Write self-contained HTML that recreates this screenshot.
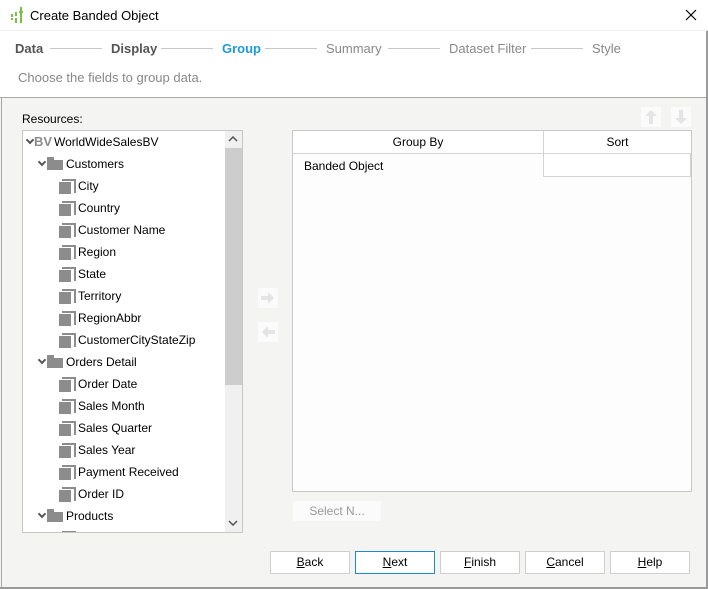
<!DOCTYPE html>
<html><head><style>
*{margin:0;padding:0;box-sizing:border-box}
body{width:708px;height:589px;overflow:hidden;background:#f4f4f3;font-family:"Liberation Sans",sans-serif;font-size:12px;color:#000;position:relative}
.a{position:absolute}
.top{left:0;top:0;width:708px;height:98px;background:#fff;border-bottom:1px solid #a8a8a8}
.step{top:41px;font-size:13px;font-weight:bold;color:#555}
.ln{top:48px;height:1px;background:#c8c8c8}
.dis{color:#888;font-weight:normal}
.tree{left:22px;top:130px;width:221px;height:403px;background:#fff;border:1px solid #c8c8c8;overflow:hidden}
.r{position:absolute;white-space:nowrap;height:22px;line-height:22px}
.fi{position:absolute;width:15px;height:15px}
.fi:before{content:"";position:absolute;left:3px;top:0;width:12px;height:12px;background:#fff;border:2px solid #8c8c8c;border-left:none;border-bottom:none}
.fi:after{content:"";position:absolute;left:0;top:3px;width:12px;height:12px;background:#8c8c8c}
.fo{position:absolute;width:16px;height:13px}
.fo:before{content:"";position:absolute;left:0;top:0;width:7px;height:3px;background:#8c8c8c}
.fo:after{content:"";position:absolute;left:0;top:3px;width:16px;height:10px;background:#8c8c8c}
.chev{position:absolute;width:6px;height:6px;border-right:2px solid #555;border-bottom:2px solid #555;transform:rotate(45deg)}
.btn{top:551px;width:80px;height:23px;background:#fff;border:1px solid #cfcfcf;text-align:center;line-height:21px;font-size:12px}
</style></head><body>
<div class="a top"></div>
<div class="a" style="left:0;top:30px;width:708px;height:1px;background:#f0f0f0"></div>
<svg class="a" style="left:10px;top:6px" width="14" height="18"><g fill="#7bc043"><rect x="1" y="8" width="2" height="3"/><rect x="1" y="12" width="2" height="2"/><rect x="5" y="6" width="2" height="11"/><rect x="5" y="10" width="2" height="2" fill="#fff"/><rect x="10" y="1" width="2" height="16"/><rect x="9" y="5" width="4" height="2"/></g></svg>
<div class="a" style="left:30px;top:8px;font-size:13px">Create Banded Object</div>
<svg class="a" style="left:685px;top:9px" width="12" height="12"><path d="M1 1L11 11M11 1L1 11" stroke="#000" stroke-width="1.2"/></svg>
<div class="a step" style="left:15px">Data</div>
<div class="a ln" style="left:50px;width:52px"></div>
<div class="a step" style="left:111px">Display</div>
<div class="a ln" style="left:161px;width:52px"></div>
<div class="a step" style="left:222px;color:#1e9bd7">Group</div>
<div class="a ln" style="left:265px;width:52px"></div>
<div class="a step dis" style="left:326px">Summary</div>
<div class="a ln" style="left:388px;width:52px"></div>
<div class="a step dis" style="left:449px">Dataset Filter</div>
<div class="a ln" style="left:531px;width:52px"></div>
<div class="a step dis" style="left:592px">Style</div>
<div class="a" style="left:18px;top:70px;font-size:13px;color:#888">Choose the fields to group data.</div>
<div class="a" style="left:706px;top:31px;width:2px;height:558px;background:#9a9a9a"></div>
<div class="a" style="left:1px;top:98px;width:1px;height:491px;background:#a8a8a8"></div>
<div class="a" style="left:0;top:587px;width:708px;height:2px;background:#9a9a9a"></div>
<div class="a" style="left:22px;top:112px">Resources:</div>
<div class="a tree">
 <div class="chev" style="left:4px;top:6px"></div>
 <div class="r" style="left:11px;top:0;font-weight:bold;font-size:13px;color:#8c8c8c">BV</div>
 <div class="r" style="left:31px;top:0">WorldWideSalesBV</div>
 <div class="chev" style="left:16px;top:28px"></div><div class="fo" style="left:24px;top:26px"></div><div class="r" style="left:43px;top:22px">Customers</div>
 <div class="fi" style="left:36px;top:48px"></div><div class="r" style="left:55px;top:44px">City</div>
 <div class="fi" style="left:36px;top:70px"></div><div class="r" style="left:55px;top:66px">Country</div>
 <div class="fi" style="left:36px;top:92px"></div><div class="r" style="left:55px;top:88px">Customer Name</div>
 <div class="fi" style="left:36px;top:114px"></div><div class="r" style="left:55px;top:110px">Region</div>
 <div class="fi" style="left:36px;top:136px"></div><div class="r" style="left:55px;top:132px">State</div>
 <div class="fi" style="left:36px;top:158px"></div><div class="r" style="left:55px;top:154px">Territory</div>
 <div class="fi" style="left:36px;top:180px"></div><div class="r" style="left:55px;top:176px">RegionAbbr</div>
 <div class="fi" style="left:36px;top:202px"></div><div class="r" style="left:55px;top:198px">CustomerCityStateZip</div>
 <div class="chev" style="left:16px;top:226px"></div><div class="fo" style="left:24px;top:224px"></div><div class="r" style="left:43px;top:220px">Orders Detail</div>
 <div class="fi" style="left:36px;top:246px"></div><div class="r" style="left:55px;top:242px">Order Date</div>
 <div class="fi" style="left:36px;top:268px"></div><div class="r" style="left:55px;top:264px">Sales Month</div>
 <div class="fi" style="left:36px;top:290px"></div><div class="r" style="left:55px;top:286px">Sales Quarter</div>
 <div class="fi" style="left:36px;top:312px"></div><div class="r" style="left:55px;top:308px">Sales Year</div>
 <div class="fi" style="left:36px;top:334px"></div><div class="r" style="left:55px;top:330px">Payment Received</div>
 <div class="fi" style="left:36px;top:356px"></div><div class="r" style="left:55px;top:352px">Order ID</div>
 <div class="chev" style="left:16px;top:380px"></div><div class="fo" style="left:24px;top:378px"></div><div class="r" style="left:43px;top:374px">Products</div>
 <div class="fi" style="left:36px;top:400px"></div>
 <div class="a" style="left:202px;top:0;width:17px;height:401px;background:#f0f0f0"></div>
 <div class="a" style="left:202px;top:17px;width:17px;height:237px;background:#cdcdcd"></div>
 <svg class="a" style="left:205px;top:5px" width="10" height="6"><path d="M1 5L5 1L9 5" stroke="#555" stroke-width="1.5" fill="none"/></svg>
 <svg class="a" style="left:205px;top:389px" width="10" height="6"><path d="M1 1L5 5L9 1" stroke="#555" stroke-width="1.5" fill="none"/></svg>
</div>
<svg class="a" style="left:258px;top:288px" width="20" height="20"><rect width="20" height="20" fill="#fbfbfb"/><path d="M3 8h7v-4l6 6-6 6v-4H3z" fill="#e4e4e4"/></svg>
<svg class="a" style="left:258px;top:322px" width="20" height="20"><rect width="20" height="20" fill="#fbfbfb"/><path d="M17 8h-7v-4l-6 6 6 6v-4h7z" fill="#e4e4e4"/></svg>
<svg class="a" style="left:641px;top:107px" width="20" height="20"><rect width="20" height="20" fill="#fbfbfb"/><path d="M8 17v-8H4l6-6 6 6h-4v8z" fill="#e4e4e4"/></svg>
<svg class="a" style="left:671px;top:107px" width="20" height="20"><rect width="20" height="20" fill="#fbfbfb"/><path d="M8 3v8H4l6 6 6-6h-4V3z" fill="#e4e4e4"/></svg>
<div class="a" style="left:292px;top:130px;width:400px;height:362px;background:#fcfdfc;border:1px solid #c8c8c8"></div>
<div class="a" style="left:293px;top:131px;width:398px;height:23px;background:#fff;border-bottom:1px solid #d4d4d4"></div>
<div class="a" style="left:543px;top:131px;width:1px;height:46px;background:#d4d4d4"></div>
<div class="a" style="left:544px;top:154px;width:147px;height:23px;background:#fff;border-bottom:1px solid #d4d4d4;border-right:1px solid #d4d4d4"></div>
<div class="a" style="left:293px;top:135px;width:250px;text-align:center">Group By</div>
<div class="a" style="left:544px;top:135px;width:147px;text-align:center">Sort</div>
<div class="a" style="left:304px;top:159px">Banded Object</div>
<div class="a" style="left:293px;top:501px;width:88px;height:20px;background:#fbfbfb;color:#999;text-align:center;line-height:20px">Select N...</div>
<div class="a btn" style="left:270px"><u>B</u>ack</div>
<div class="a btn" style="left:355px;border-color:#1e88d0"><u>N</u>ext</div>
<div class="a btn" style="left:440px"><u>F</u>inish</div>
<div class="a btn" style="left:525px"><u>C</u>ancel</div>
<div class="a btn" style="left:610px"><u>H</u>elp</div>
</body></html>
